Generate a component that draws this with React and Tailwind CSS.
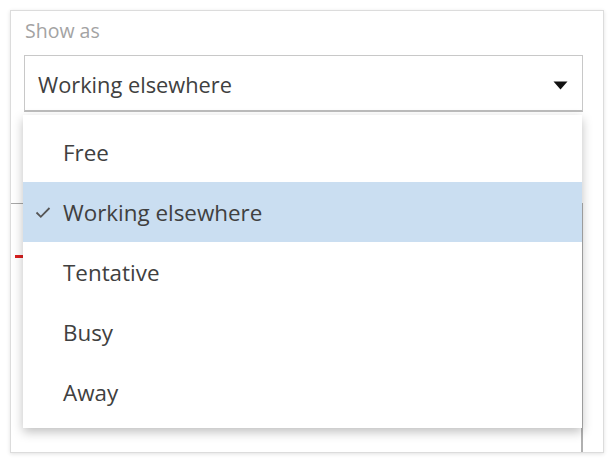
const options = ['Free', 'Working elsewhere', 'Tentative', 'Busy', 'Away'];
const selected = 'Working elsewhere';

function Check() {
  return (
    <svg width="16" height="13" viewBox="0 0 16 13" className="shrink-0">
      <path d="M1.5 6.5 L5.8 10.8 L14.5 2" fill="none" stroke="#555" strokeWidth="1.8" />
    </svg>
  );
}

export default function App() {
  return (
    <div
      className="w-[614px] h-[462px] bg-white pl-[10px] pr-[10px] pt-[10px] pb-[9px]"
      style={{ fontFamily: '"Open Sans", "Noto Sans", sans-serif' }}
    >
      <div className="relative h-full border border-[#dcdcdc] shadow-[0_1px_4px_rgba(0,0,0,0.12)] pl-[12px] pr-[20px] pt-[8px]">
        <p className="text-[19.5px] leading-[24px] text-[#a3a3a3] pl-[2px]">Show as</p>

        <div className="mt-[12px] ml-[1px] h-[57px] border border-[#c8c8c8] border-b-[2px] border-b-[#bdbdbd] flex items-center justify-between pl-[13px] pr-[14px]">
          <span className="text-[21.8px] text-[#404040] pt-[4px]">{selected}</span>
          <svg width="15" height="9" viewBox="0 0 15 9" className="mt-[4px]">
            <path d="M0.5 0.5 H14.5 L7.5 8.5 Z" fill="#111" />
          </svg>
        </div>

        {/* content behind the open menu */}
        <div className="-ml-[12px] mt-[91px] h-px w-[14px] bg-[#a8a8a8]" />
        <div className="ml-[-8px] mt-[51px] h-[3px] w-[9px] bg-[#d92020]" />
        <div className="absolute right-[20px] top-[192px] bottom-0 w-[2px] bg-[#b0b0b0]" />

        {/* open menu */}
        <div className="absolute left-[12px] right-[21px] top-[104px] bg-white pt-[7px] pb-[6px] shadow-[0_4px_10px_rgba(0,0,0,0.25)]">
          {options.map((o) => (
            <div
              key={o}
              className={`h-[60px] flex items-center text-[22.4px] text-[#404040] ${o === selected ? 'bg-[#cadef1]' : ''}`}
            >
              <span className="w-[40px] pl-[12px] flex items-center">{o === selected && <Check />}</span>
              <span className="pt-[2px]">{o}</span>
            </div>
          ))}
        </div>
      </div>
    </div>
  );
}
